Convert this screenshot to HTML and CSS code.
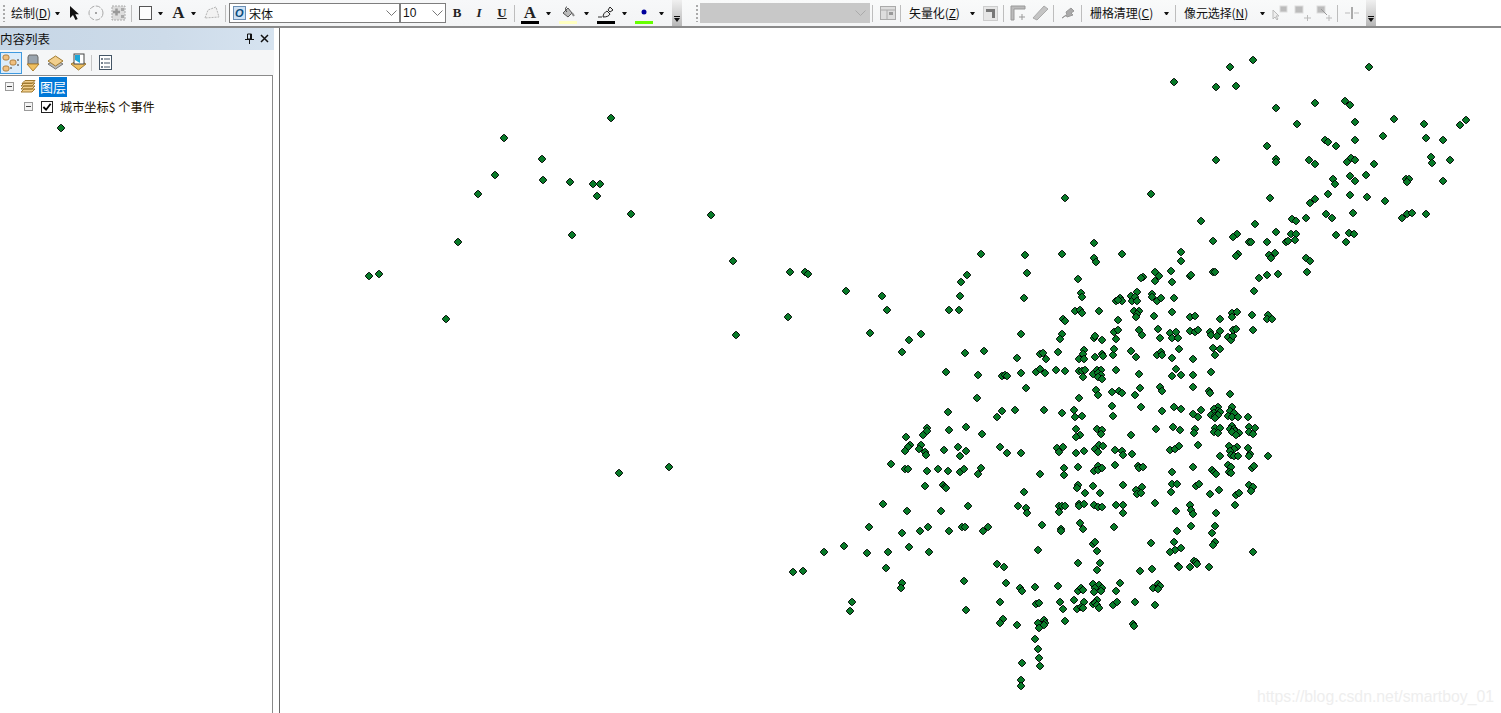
FILE: index.html
```html
<!DOCTYPE html>
<html lang="zh">
<head>
<meta charset="utf-8">
<title>ArcMap</title>
<link rel="stylesheet" href="styles.css">
</head>
<body>
<header class="toolbar">
  <div class="strip">
    <span class="grip m3"></span>
    <span class="label w41 m6">绘制(<u>D</u>)</span>
    <span class="caret m3"></span>
    <svg class="m9" width="11" height="16" viewBox="0 0 11 16"><path d="M1 1v12l3-3 2.500 5 2.200-1-2.400-4.800H10z" fill="#111"/></svg>
    <svg class="m8" width="16" height="16" viewBox="0 0 16 16"><circle cx="8" cy="8" r="7" fill="none" stroke="#aaa" stroke-dasharray="5 1.500"/><circle cx="8" cy="8" r="1" fill="#888"/></svg>
    <svg class="m7" width="15" height="16" viewBox="0 0 15 16"><rect x="1" y="1" width="13" height="14" fill="#ddd" stroke="#aaa" stroke-dasharray="2 1"/><path d="M2 7h7M5.500 3.500v7" stroke="#999" stroke-width="2.500"/><rect x="10" y="3" width="3" height="3" fill="#aaa"/><rect x="10" y="10" width="3" height="3" fill="#aaa"/></svg>
    <span class="sep m5"></span>
    <svg class="m7" width="13" height="14" viewBox="0 0 13 14"><rect x=".5" y=".5" width="12" height="13" fill="#fdfdfd" stroke="#555"/></svg>
    <span class="caret m6"></span>
    <span class="serif-a m9">A</span>
    <span class="caret m6"></span>
    <svg class="m8" width="16" height="14" viewBox="0 0 16 14"><path d="M1 12l3-8 8-3 3 10z" fill="#f2f2f2" stroke="#b5b5b5" stroke-dasharray="2 1"/></svg>
    <span class="sep m5"></span>
    <div class="combo font-combo m3">
      <svg width="13" height="14" viewBox="0 0 13 14"><rect x=".5" y=".5" width="12" height="13" fill="#cfe2f5" stroke="#6a8fb5"/><text x="2" y="11" class="font-o">O</text></svg>
      <span class="combo-text">宋体</span>
      <svg class="chev" width="11" height="6" viewBox="0 0 11 6"><path d="M.5.500l5 5 5-5" fill="none" stroke="#777"/></svg>
    </div>
    <div class="combo size-combo">
      <span class="size-text">10</span>
      <svg class="chev" width="11" height="6" viewBox="0 0 11 6"><path d="M.5.500l5 5 5-5" fill="none" stroke="#777"/></svg>
    </div>
    <span class="fmt fmt-b m6">B</span>
    <span class="fmt fmt-i">I</span>
    <span class="fmt fmt-u"><u>U</u></span>
    <span class="sep m7"></span>
    <div class="colorbtn m6">
      <span class="serif-a small">A</span>
      <span class="bar bar-black"></span>
    </div>
    <span class="caret m7"></span>
    <div class="colorbtn m8">
      <svg width="14" height="13" viewBox="0 0 14 13"><path d="M2 7l5-5 4 5-4 4z" fill="#bbb" stroke="#555"/><path d="M6 1c-2 0-2 3 0 5" fill="none" stroke="#333"/><path d="M11 7l2 3" stroke="#888" stroke-width="2"/></svg>
      <span class="bar bar-yellow"></span>
    </div>
    <span class="caret m7"></span>
    <div class="colorbtn m8">
      <svg width="16" height="13" viewBox="0 0 16 13"><path d="M5 11c0-3 2-5 4-6l3 3c-1 2-3 3-7 3zM10 4l2-3 3 3-3 2z" fill="#eee" stroke="#222"/><path d="M0 11h4" stroke="#333"/></svg>
      <span class="bar bar-black"></span>
    </div>
    <span class="caret m7"></span>
    <div class="colorbtn m8">
      <svg width="14" height="13" viewBox="0 0 14 13"><circle cx="7" cy="6" r="2.500" fill="#00009c"/></svg>
      <span class="bar bar-green"></span>
    </div>
    <span class="caret m6"></span>
    <span class="overflow m8"><i></i></span>
  </div>
  <div class="strip second">
    <span class="grip m14"></span>
    <div class="gray-combo m2">
      <svg width="11" height="6" viewBox="0 0 11 6"><path d="M.5.500l5 5 5-5" fill="none" stroke="#aaa"/></svg>
    </div>
    <span class="sep m2"></span>
    <svg class="m7" width="16" height="14" viewBox="0 0 16 14"><rect x=".5" y=".5" width="15" height="13" fill="#ddd" stroke="#aaa"/><path d="M1 4h14M7 4v9" stroke="#aaa"/><rect x="9" y="6" width="4" height="3" fill="#999"/></svg>
    <span class="sep m4"></span>
    <span class="label w51 m8">矢量化(<u>Z</u>)</span>
    <span class="caret m10"></span>
    <svg class="m8" width="15" height="15" viewBox="0 0 15 15"><rect x=".5" y=".5" width="14" height="14" fill="#e6e6e6" stroke="#aaa" stroke-dasharray="1 1"/><path d="M3 3h9v9H9V6H3z" fill="#777"/></svg>
    <span class="sep m5"></span>
    <svg class="m6" width="16" height="16" viewBox="0 0 16 16"><path d="M1 15V1h14v3H4v11z" fill="#bbb" stroke="#999"/><path d="M9 12h6M12 9v6" stroke="#999"/></svg>
    <svg class="m6" width="17" height="16" viewBox="0 0 17 16"><path d="M1 13L12 1l4 3L5 15z" fill="#c4c4c4" stroke="#aaa"/></svg>
    <span class="sep m4"></span>
    <svg class="m7" width="15" height="14" viewBox="0 0 15 14"><path d="M1 12l5-3-1-3 5-4 3 3-3 2 2 2-6 2-1-2z" fill="#aaa" stroke="#999"/></svg>
    <span class="sep m5"></span>
    <span class="label w63 m8">栅格清理(<u>C</u>)</span>
    <span class="caret m11"></span>
    <span class="sep m6"></span>
    <span class="label w65 m8">像元选择(<u>N</u>)</span>
    <span class="caret m11"></span>
    <svg class="m7" width="16" height="16" viewBox="0 0 16 16"><path d="M1 5v9l2-2 2 3 1-1-2-3h3z" fill="#eee" stroke="#bbb"/><rect x="8" y="1" width="7" height="6" fill="#bbb" stroke="#ddd"/></svg>
    <svg class="m6" width="18" height="16" viewBox="0 0 18 16"><rect x="1" y="1" width="8" height="7" fill="#bbb" stroke="#ddd"/><path d="M10 13h7M13.500 10v6" stroke="#bbb"/></svg>
    <svg class="m4" width="17" height="16" viewBox="0 0 17 16"><rect x="1" y="1" width="8" height="7" fill="#bbb" stroke="#ddd"/><path d="M5 4l6 6" stroke="#999"/><path d="M10 13h6M13 10v6" stroke="#bbb"/></svg>
    <span class="sep m4"></span>
    <svg class="m7" width="14" height="14" viewBox="0 0 14 14"><path d="M7 1v12" stroke="#aaa" stroke-width="2"/><path d="M0 7h5M9 7h5" stroke="#bbb"/></svg>
    <span class="overflow m7"><i></i></span>
  </div>
</header>
<main class="workspace">
  <aside class="toc">
    <div class="toc-title">
      <span class="toc-name">内容列表</span>
      <svg width="9" height="11" viewBox="0 0 9 11"><path d="M2.500 1h4v5h-4zM0 6.500h9M4.500 7v4M5.500 1v5" fill="none" stroke="#111"/></svg>
      <svg class="close" width="9" height="9" viewBox="0 0 9 9"><path d="M1 1l7 7M8 1L1 8" stroke="#111" stroke-width="1.500"/></svg>
    </div>
    <div class="toc-tools">
      <span class="toc-active">
        <svg width="18" height="18" viewBox="0 0 18 18"><rect x="1" y="1" width="6" height="5" rx="2" fill="#f0c080" stroke="#b08040"/><rect x="8" y="6" width="6" height="5" rx="2" fill="#f0c080" stroke="#b08040"/><rect x="1" y="12" width="6" height="5" rx="2" fill="#f0c080" stroke="#b08040"/><path d="M15 6h2M15 11h2M8 14h2" stroke="#333"/></svg>
      </span>
      <svg class="m4" width="14" height="19" viewBox="0 0 14 19"><path d="M3 2h8l1 2v7H2V4z" fill="#9aa4ae" stroke="#666"/><path d="M1 11h12l-6 7z" fill="#f0c060" stroke="#b08030"/></svg>
      <svg class="m7" width="17" height="17" viewBox="0 0 17 17"><path d="M1 10l7.500-4 7.500 4-7.500 5z" fill="#bbb" stroke="#777"/><path d="M1 7l7.500-5L16 7l-7.500 5z" fill="#f2cf8d" stroke="#a07a30"/></svg>
      <svg class="m6" width="17" height="19" viewBox="0 0 17 19"><path d="M1 11l7.500-4L16 11l-7.500 6z" fill="#f0c060" stroke="#a07a30"/><rect x="4" y="1" width="10" height="10" fill="#fff" stroke="#444"/><path d="M5 2h5v8l-5-3z" fill="#1ba6d9"/></svg>
      <span class="sep tall m4"></span>
      <svg class="m7" width="13" height="15" viewBox="0 0 13 15"><rect x=".5" y=".5" width="12" height="14" fill="#fff" stroke="#456"/><path d="M5 4h6M5 8h6M5 12h6" stroke="#456"/><circle cx="3" cy="4" r="1" fill="#456"/><circle cx="3" cy="8" r="1" fill="#456"/><circle cx="3" cy="12" r="1" fill="#456"/></svg>
    </div>
    <div class="tree">
      <div class="row row-root">
        <span class="expander"></span>
        <svg class="m6" width="16" height="14" viewBox="0 0 16 14"><path d="M1 12l3-3h11l-3 3zM1 9l3-3h11l-3 3zM1 6l3-3h11l-3 3zM2 3.500l3-3h10l-3 3z" fill="#f2cf8d" stroke="#a07a30"/></svg>
        <span class="selected">图层</span>
      </div>
      <div class="row row-layer">
        <span class="expander"></span>
        <span class="checkbox"><svg width="10" height="10" viewBox="0 0 11 11"><path d="M1.500 5.500l3 3 5-6.500" fill="none" stroke="#000" stroke-width="2"/></svg></span>
        <span class="layer-name">城市坐标$ 个事件</span>
      </div>
      <div class="row row-symbol">
        <svg width="8" height="8" viewBox="0 0 8 8"><path d="M3.500.500h1l3 3v1l-3 3h-1l-3-3v-1z" fill="#087a28" stroke="#000"/></svg>
      </div>
    </div>
  </aside>
  <section class="map">
    <svg id="points" class="points" viewBox="280 28 1221 685" width="1221" height="685"></svg>
    <span class="watermark">https://blog.csdn.net/smartboy_01</span>
  </section>
</main>
<script src="app.js"></script>
</body>
</html>
```
FILE: styles.css
```css
* { box-sizing: border-box; }
html, body { margin: 0; height: 100%; overflow: hidden; background: #fff; }
body {
  width: 1501px; height: 713px;
  display: flex; flex-direction: column;
  font-family: "Noto Sans CJK SC", "Liberation Sans", sans-serif;
  font-size: 12px; color: #111;
}
svg { display: block; flex: none; }

.toolbar {
  height: 28px; flex: none;
  display: flex; align-items: stretch;
  background: #fff;
  border-bottom: 2px solid #8a8a8a;
}
.strip {
  display: flex; align-items: center;
  background: linear-gradient(#f7f8f9, #f3f4f5);
  height: 26px;
  width: 682px;
  flex: none;
}
.second { width: 694px; background: linear-gradient(#f9fafa, #f4f5f6); }

.m2 { margin-left: 2px; } .m3 { margin-left: 3px; } .m4 { margin-left: 4px; }
.m5 { margin-left: 5px; } .m6 { margin-left: 6px; } .m7 { margin-left: 7px; }
.m8 { margin-left: 8px; } .m9 { margin-left: 9px; } .m10 { margin-left: 10px; }
.m11 { margin-left: 11px; } .m14 { margin-left: 14px; }

.grip {
  width: 2px; height: 17px; flex: none;
  background: repeating-linear-gradient(#aaa 0 2px, transparent 2px 4px);
}
.label { flex: none; white-space: nowrap; line-height: 16px; font-size: 12px; letter-spacing: -.1px; }
.w41 { width: 41px; } .w51 { width: 51px; } .w63 { width: 63px; } .w65 { width: 65px; }
.caret {
  flex: none; width: 5px; height: 3px;
  border-left: 2.500px solid transparent; border-right: 2.500px solid transparent;
  border-top: 3px solid #111;
}
.sep { flex: none; width: 1px; height: 17px; background: #bdbdbd; }
.sep.tall { height: 16px; background: #c6c6c6; }
.serif-a {
  flex: none; width: 13px; text-align: center;
  font: bold 17px/16px "Liberation Serif", serif; color: #222;
}
.serif-a.small { width: 17px; line-height: 13px; }

.combo {
  flex: none; height: 20px; display: flex; align-items: center;
  background: #fff; border: 1px solid #7e7e7e;
}
.font-combo { width: 171px; padding: 0 2px 0 3px; }
.size-combo { width: 46px; padding: 0 2px; border-left-width: 1px; }
.combo-text { margin-left: 3px; font-size: 12px; flex: 1; }
.size-text { font: 12px "Liberation Sans", sans-serif; flex: 1; }
.chev { margin-left: auto; }
.font-o { font: italic bold 11px "Liberation Sans", sans-serif; fill: #0a4d7c; }

.fmt { flex: none; font: 13px "Liberation Serif", serif; width: 10px; text-align: center; color: #222; }
.fmt-b { font-weight: bold; }
.fmt-i { font-style: italic; font-weight: bold; margin-left: 12px; }
.fmt-u { font-weight: bold; margin-left: 13px; }

.colorbtn {
  flex: none; width: 18px; height: 21px;
  display: flex; flex-direction: column; align-items: center;
  padding-top: 3px; justify-content: space-between;
}
.bar { display: block; width: 18px; height: 3px; flex: none; }
.bar-black { background: #000; }
.bar-yellow { background: #ffffc0; }
.bar-green { background: #66ff00; }

.overflow {
  flex: none; width: 10px; height: 26px;
  background: linear-gradient(#f0f0f0, #b8b8b8);
  display: flex; align-items: flex-end; justify-content: center;
  padding-bottom: 3px;
  position: relative;
}
.overflow i {
  display: block; width: 6px; height: 5px;
  border-left: 3px solid transparent; border-right: 3px solid transparent;
  border-top: 4px solid #111;
}
.overflow::before {
  content: ""; position: absolute; left: 2px; bottom: 9px; width: 6px; height: 1px; background: #111;
}
.gray-combo {
  flex: none; width: 170px; height: 20px; background: #c8c8c8;
  display: flex; align-items: center; justify-content: flex-end; padding-right: 4px;
}

.workspace { flex: 1; display: flex; min-height: 0; }
.toc { flex: none; width: 279px; display: flex; flex-direction: column; background: #fff; }
.toc-title {
  height: 22px; width: 274px; flex: none;
  display: flex; align-items: center; gap: 6px; padding: 0 5px 2px 0;
  background: linear-gradient(90deg, #c6d6e6, #cddbe9 60%, #d6e3f0);
}
.toc-name { flex: 1; font-size: 12.500px; color: #111; }
.toc-tools {
  width: 274px; height: 25px; flex: none;
  display: flex; align-items: center;
  background: #f5f6f7;
}
.toc-active {
  flex: none; width: 22px; height: 22px; display: flex; align-items: center; justify-content: center;
  background: #dcecfa; border: 1px solid #3f9ae0;
}
.tree {
  flex: 1; width: 273px;
  border-top: 1px solid #8a8a8a; border-right: 1px solid #8a8a8a;
  background: #fff;
}
.row { display: flex; align-items: center; height: 20px; }
.row-root { padding-left: 5px; height: 21px; }
.row-layer { padding-left: 24px; height: 19px; }
.row-symbol { padding-left: 57px; height: 23px; }
.expander {
  flex: none; width: 9px; height: 9px; border: 1px solid #9a9a9a; background: #f4f4f4;
  display: flex; align-items: center; justify-content: center;
}
.expander::before { content: ""; width: 5px; height: 1px; background: #444; }
.selected {
  margin-left: 3px; width: 28px; height: 20px; line-height: 20px; text-align: center;
  background: #0078d7; color: #fff; font-size: 13px;
}
.checkbox {
  flex: none; margin-left: 8px; width: 12px; height: 12px; border: 1px solid #222; background: #fff;
}
.layer-name { margin-left: 7px; font-size: 12.200px; color: #1a1200; white-space: nowrap; }

.map {
  flex: 1; position: relative; overflow: hidden;
  background: #fff; border-left: 1px solid #696969;
}
.marker { fill: #087a28; stroke: #000; stroke-width: 1; }
.watermark {
  position: absolute; right: 7px; bottom: 7px;
  font: 15.800px "Liberation Sans", sans-serif; color: #eeeeee; white-space: nowrap;
}
```
FILE: app.js
```js
var pts = [
1253,60,1230,67,1369,67,1174,82,1216,87,1236,86,1276,108,1315,103,1345,101,1350,105,1355,122,1394,119,1424,124,1460,125,1466,120,1297,124,
1325,140,1328,142,1336,146,1355,140,1383,136,1426,138,1443,140,1267,146,1216,160,1276,159,1276,162,1309,160,1315,164,1347,162,1351,158,1355,160,1374,164,1431,157,1432,163,1450,160,
1333,179,1335,184,1350,176,1355,181,1366,175,1406,179,1409,179,1407,182,1443,181,1151,194,1270,198,1328,194,1350,195,1367,197,1385,201,1310,203,1315,199,1326,214,1332,218,1353,213,1402,218,1407,214,1412,213,1426,214,
1201,221,1255,224,1292,219,1296,221,1306,218,1237,234,1233,237,1276,232,1291,234,1296,234,1336,235,1349,233,1354,234,1213,241,1249,242,1251,242,1267,242,1286,242,1288,241,1295,240,1346,242,
1181,252,1181,261,1238,254,1236,256,1269,255,1271,258,1275,253,1306,258,1310,261,1171,271,1155,272,1159,276,1143,277,1141,278,1155,281,1172,282,1190,276,1191,275,1213,272,1215,272,1259,278,1267,275,1278,274,1307,272,1254,291,
1094,243,981,254,1025,255,1062,254,1094,258,1096,262,1122,254,967,275,961,282,1027,273,1078,279,
882,296,887,310,960,296,949,310,959,310,1024,298,1081,293,1082,297,1116,301,1120,298,1122,301,1118,300,1131,296,1137,292,1132,301,1135,297,1137,301,1152,294,1152,297,1157,301,1161,298,1174,298,
1075,311,1080,310,1082,313,1099,311,1134,311,1139,311,1137,314,1136,317,1154,316,1172,312,1190,317,1195,316,1220,319,1232,313,1237,312,1232,317,1252,315,1268,315,1267,319,1272,319,1063,319,1065,321,1118,320,
870,333,909,340,921,334,1021,334,1062,334,1060,339,1094,338,1095,336,1102,340,1114,332,1118,330,1116,339,1139,330,1142,335,1158,329,1160,338,1170,333,1176,332,1172,338,1178,338,1190,331,1195,332,1198,330,1210,332,1211,335,1217,336,1220,331,1228,337,1231,340,1233,336,1233,330,1236,329,1253,330,
902,352,965,353,984,351,1017,358,1040,354,1043,353,1046,359,1058,352,1084,350,1083,354,1079,359,1084,359,1095,357,1102,354,1103,356,1113,355,1114,349,1131,351,1136,357,1157,355,1161,352,1162,355,1172,358,1179,349,1193,359,1213,348,1220,349,1215,355,
946,372,978,375,1002,376,1005,375,1007,376,1021,373,1036,372,1040,369,1045,373,1056,370,1065,371,1079,371,1082,371,1085,370,1083,377,1093,374,1097,370,1101,370,1098,373,1101,375,1098,377,1102,379,1116,370,1139,374,1172,376,1176,369,1181,375,1193,375,1211,372,
1026,388,1096,390,1098,395,1112,392,1119,391,1122,393,1135,395,1140,388,1160,387,1162,391,1193,387,1209,391,1210,393,1230,394,977,398,1079,398,
948,412,1002,411,997,417,1015,410,1044,410,1062,413,1074,410,1075,417,1082,416,1112,406,1113,416,1141,407,1162,411,1174,407,1181,409,
1201,410,1193,414,1198,417,1218,407,1214,409,1218,411,1220,412,1214,413,1211,415,1215,416,1218,415,1215,418,1232,407,1230,411,1234,413,1228,416,1232,417,1238,417,1248,417,
1195,429,1194,433,1215,428,1220,428,1214,432,1218,433,1232,426,1230,429,1234,429,1235,431,1232,432,1239,433,1236,435,1249,427,1255,428,1249,432,1253,434,1198,445,
1229,446,1237,447,1234,449,1230,451,1248,448,1250,454,1249,456,1231,455,1234,456,1238,456,1220,456,1268,456,
927,428,927,431,906,437,923,435,949,430,966,427,982,434,1076,429,1097,429,1102,430,1101,434,1080,435,1076,437,1131,435,1156,429,1173,427,1180,430,
910,445,908,447,905,451,921,445,919,449,925,452,926,455,944,450,958,447,966,451,960,456,1000,447,1007,453,1021,453,1057,448,1063,447,1059,452,1076,453,1084,451,1095,449,1099,445,1103,446,1098,452,1115,450,1122,451,1123,455,1132,454,1170,450,1175,449,1179,446,
891,464,905,469,908,469,927,471,938,469,948,471,960,472,964,469,981,468,978,474,1040,474,1064,468,1064,475,1078,467,1094,471,1098,466,1098,470,1102,468,1115,465,1138,466,1139,468,1143,467,1172,472,1193,467,1212,470,1214,472,1216,474,1228,465,1231,467,1229,472,1231,473,1252,468,1254,466,
925,486,943,485,945,487,946,488,1024,492,1078,485,1077,488,1093,486,1085,493,1100,493,1123,485,1136,490,1142,487,1137,494,1141,493,1172,484,1177,484,1171,492,1196,486,1199,484,1210,494,1219,490,1236,495,1239,493,1249,485,1253,487,1251,491,
883,504,907,511,941,511,968,506,1018,506,1026,508,1027,513,1059,506,1062,506,1065,506,1059,512,1079,504,1079,506,1084,504,1094,505,1098,507,1102,507,1116,505,1123,505,1123,513,1155,503,1176,511,1190,505,1191,510,1193,514,1216,513,1235,505,
869,527,902,533,920,531,928,527,949,531,962,527,965,527,983,531,988,527,1042,525,1061,529,1061,531,1080,523,1083,529,1114,527,1177,531,1191,526,1215,526,1212,533,
867,553,888,552,909,547,929,552,1038,550,1093,544,1095,542,1097,551,1151,543,1174,542,1181,548,1175,550,1170,552,1215,542,1213,545,1253,552,
886,568,997,564,1004,567,1078,563,1100,563,1097,570,1140,571,1152,569,1178,566,1179,567,1190,567,1194,561,1196,562,1197,564,1209,567,
902,583,901,588,964,581,1006,583,1020,588,1022,591,1035,587,1058,586,1078,591,1081,588,1083,590,1093,584,1099,585,1095,588,1102,588,1094,592,1101,591,1120,583,1116,591,1158,584,1160,586,1153,588,1158,589,
852,602,850,611,966,610,1000,602,1036,604,1039,603,1060,602,1063,609,1074,600,1084,602,1077,609,1081,607,1083,608,1093,604,1097,600,1095,603,1097,605,1099,608,1113,605,1117,602,1135,602,1155,605,
1003,619,1000,623,1017,625,1038,623,1044,620,1045,623,1044,625,1039,628,1065,621,1133,624,1134,626,1035,639,1038,649,1039,658,1022,663,1040,666,1021,680,1021,686,
611,118,504,138,542,159,495,175,543,180,570,182,593,184,600,184,597,196,478,194,631,214,711,215,572,235,458,242,733,261,369,276,379,274,446,319,736,335,619,473,669,467,790,272,805,272,808,274,788,317,846,291,824,552,844,546,793,572,803,571,1065,198
];
var svg = document.getElementById("points");
var NS = "http://www.w3.org/2000/svg";
for (var i = 0; i < pts.length; i += 2) {
  var p = document.createElementNS(NS, "path");
  var x = pts[i], y = pts[i + 1];
  p.setAttribute("class", "marker");
  p.setAttribute("d", "M" + (x - 0.5) + " " + (y - 3.5) + "h1l3 3v1l-3 3h-1l-3-3v-1z");
  svg.appendChild(p);
}
```
